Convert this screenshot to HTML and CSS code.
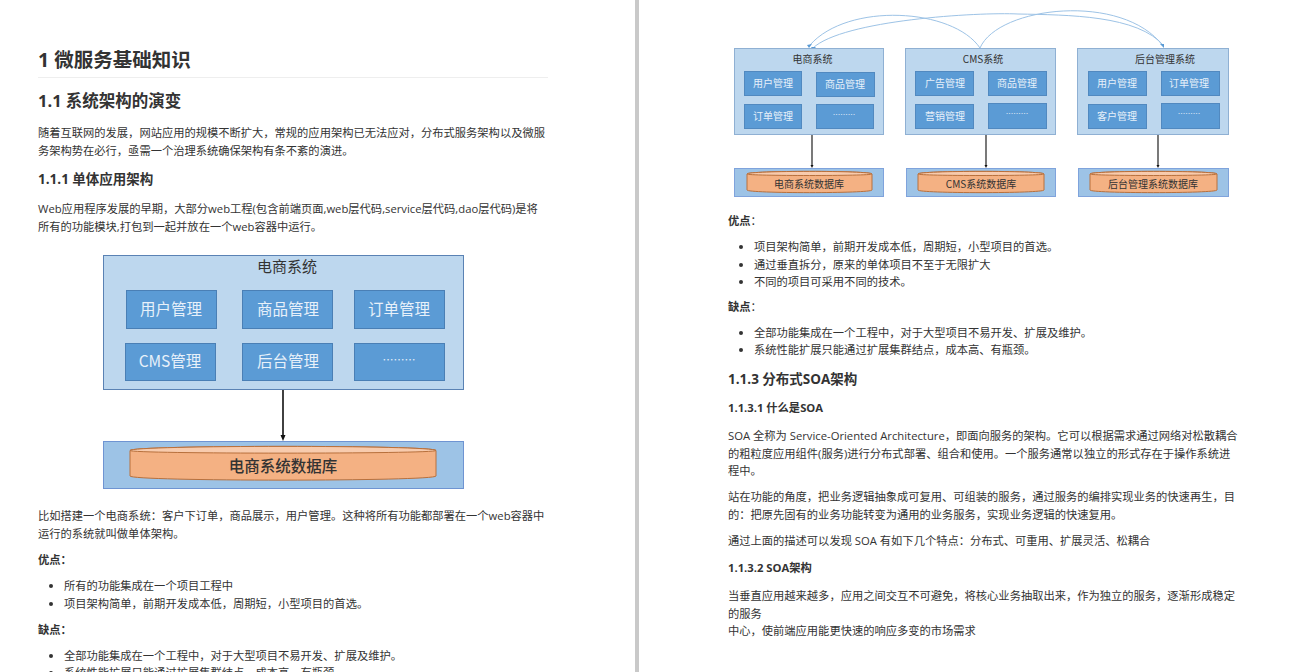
FILE: index.html
```html
<!DOCTYPE html>
<html lang="zh">
<head>
<meta charset="utf-8">
<title>微服务基础知识</title>
<link rel="stylesheet" href="styles.css">
</head>
<body>
<main class="viewer">
  <article class="page page-left">
    <h1>1 微服务基础知识</h1>
    <h2>1.1 系统架构的演变</h2>
    <p>随着互联网的发展，网站应用的规模不断扩大，常规的应用架构已无法应对，分布式服务架构以及微服务架构势在必行，亟需一个治理系统确保架构有条不紊的演进。</p>
    <h3>1.1.1 单体应用架构</h3>
    <p>Web应用程序发展的早期，大部分web工程(包含前端页面,web层代码,service层代码,dao层代码)是将所有的功能模块,打包到一起并放在一个web容器中运行。</p>
    <figure class="fig fig-mono">
      <svg width="370" height="240" viewBox="0 0 370 240">
        <rect x="5.5" y="6.5" width="360" height="134" fill="#bdd7ee" stroke="#5a82b4"/>
        <text class="t-dark" x="189" y="23" font-size="15">电商系统</text>
        <g class="box"><rect x="28.5" y="41.5" width="90" height="38"/><text x="73" y="66" font-size="15.5">用户管理</text></g>
        <g class="box"><rect x="144.5" y="41.5" width="90" height="38"/><text x="190" y="66" font-size="15.5">商品管理</text></g>
        <g class="box"><rect x="256.5" y="41.5" width="90" height="38"/><text x="301" y="66" font-size="15.5">订单管理</text></g>
        <g class="box"><rect x="27.5" y="94.5" width="90" height="37"/><text x="72" y="118" font-size="15.5">CMS管理</text></g>
        <g class="box"><rect x="144.5" y="94.5" width="90" height="37"/><text x="190" y="118" font-size="15.5">后台管理</text></g>
        <g class="box"><rect x="256.5" y="94.5" width="90" height="37"/><text x="301" y="115" font-size="11">………</text></g>
        <path d="M185 141V186" stroke="#111" stroke-width="1.6"/>
        <path d="M182.5 186h5L185 192z" fill="#111"/>
        <rect x="5.5" y="192.5" width="360" height="47" fill="#9dc3e6" stroke="#6f94d2"/>
        <path d="M32 201.5C32 196 338 196 338 201.5V227C338 232.5 32 232.5 32 227Z" fill="#f4b183" stroke="#b8703c"/>
        <path d="M32 201.5C32 205 338 205 338 201.5C338 196 32 196 32 201.5Z" fill="#f8cbad" stroke="#b8703c"/>
        <text class="t-dark t-db" x="185" y="223" font-size="15.5">电商系统数据库</text>
      </svg>
    </figure>
    <p>比如搭建一个电商系统：客户下订单，商品展示，用户管理。这种将所有功能都部署在一个web容器中运行的系统就叫做单体架构。</p>
    <p class="label"><strong>优点：</strong></p>
    <ul>
      <li>所有的功能集成在一个项目工程中</li>
      <li>项目架构简单，前期开发成本低，周期短，小型项目的首选。</li>
    </ul>
    <p class="label"><strong>缺点：</strong></p>
    <ul>
      <li>全部功能集成在一个工程中，对于大型项目不易开发、扩展及维护。</li>
      <li>系统性能扩展只能通过扩展集群结点，成本高、有瓶颈。</li>
    </ul>
  </article>
  <article class="page page-right">
    <figure class="fig fig-soa">
      <svg width="510" height="205" viewBox="0 0 510 205">
        <g fill="none" stroke="#9dc3e6" stroke-width="1">
          <path d="M252 48C225 8 120 2 82 45"/>
          <path d="M85 48C115 20 250 12 290 14C340 15 410 15 436 46"/>
          <path d="M252 48C270 6 395 -8 435 46"/>
        </g>
        <path d="M79 45l5-1-3 4zM83 47l5 0-3 3zM432 44l4 0 0 4z" fill="#5b9bd5"/>
        <g fill="#bdd7ee" stroke="#8fb0d3">
          <rect x="6.5" y="48.5" width="149" height="86"/>
          <rect x="177.5" y="48.5" width="150" height="86"/>
          <rect x="349.5" y="48.5" width="151" height="86"/>
        </g>
        <g class="t-dark" font-size="10">
          <text x="84.5" y="63">电商系统</text><text x="255" y="63">CMS系统</text><text x="437" y="63">后台管理系统</text>
        </g>
        <g class="box small">
          <rect x="16.5" y="71.5" width="57" height="24"/><text x="45" y="87">用户管理</text>
          <rect x="88.5" y="72.5" width="58" height="24"/><text x="117" y="88">商品管理</text>
          <rect x="16.5" y="104.5" width="57" height="24"/><text x="45" y="120">订单管理</text>
          <rect x="88.5" y="104.5" width="57" height="24"/><text class="dots" x="116" y="118">………</text>
          <rect x="187.5" y="71.5" width="58" height="24"/><text x="217" y="87">广告管理</text>
          <rect x="260.5" y="71.5" width="58" height="24"/><text x="289" y="87">商品管理</text>
          <rect x="187.5" y="104.5" width="58" height="24"/><text x="217" y="120">营销管理</text>
          <rect x="260.5" y="103.5" width="58" height="25"/><text class="dots" x="289" y="117">………</text>
          <rect x="360.5" y="71.5" width="58" height="24"/><text x="389" y="87">用户管理</text>
          <rect x="433.5" y="71.5" width="58" height="24"/><text x="461" y="87">订单管理</text>
          <rect x="360.5" y="104.5" width="58" height="24"/><text x="389" y="120">客户管理</text>
          <rect x="433.5" y="103.5" width="58" height="25"/><text class="dots" x="461" y="117">………</text>
        </g>
        <g stroke="#222" stroke-width="1.2">
          <path d="M84 135V166M258 135V166M430 135V166"/>
        </g>
        <path d="M82.5 165h3L84 168zM256.5 165h3L258 168zM428.5 165h3L430 168z" fill="#111"/>
        <g fill="#9dc3e6" stroke="#7fa3dc">
          <rect x="6.5" y="168.5" width="149" height="28"/>
          <rect x="178.5" y="168.5" width="149" height="28"/>
          <rect x="350.5" y="168.5" width="150" height="28"/>
        </g>
        <g fill="#f4b183" stroke="#b8703c">
          <path d="M19 174C19 170.5 144 170.5 144 174V190C144 193.5 19 193.5 19 190Z"/>
          <path d="M190 174C190 170.5 316 170.5 316 174V190C316 193.5 190 193.5 190 190Z"/>
          <path d="M362 174C362 170.5 489 170.5 489 174V190C489 193.5 362 193.5 362 190Z"/>
        </g>
        <g fill="#f8cbad" stroke="#b8703c">
          <path d="M19 174C19 170.5 144 170.5 144 174C144 176 19 176 19 174Z"/>
          <path d="M190 174C190 170.5 316 170.5 316 174C316 176 190 176 190 174Z"/>
          <path d="M362 174C362 170.5 489 170.5 489 174C489 176 362 176 362 174Z"/>
        </g>
        <g class="t-dark" font-size="10">
          <text x="81" y="188">电商系统数据库</text><text x="253" y="188">CMS系统数据库</text><text x="425" y="188">后台管理系统数据库</text>
        </g>
      </svg>
    </figure>
    <p class="label label-top"><strong>优点</strong>：</p>
    <ul>
      <li>项目架构简单，前期开发成本低，周期短，小型项目的首选。</li>
      <li>通过垂直拆分，原来的单体项目不至于无限扩大</li>
      <li>不同的项目可采用不同的技术。</li>
    </ul>
    <p class="label"><strong>缺点</strong>：</p>
    <ul>
      <li>全部功能集成在一个工程中，对于大型项目不易开发、扩展及维护。</li>
      <li>系统性能扩展只能通过扩展集群结点，成本高、有瓶颈。</li>
    </ul>
    <h3>1.1.3 分布式SOA架构</h3>
    <h4>1.1.3.1 什么是SOA</h4>
    <p>SOA 全称为 Service-Oriented Architecture，即面向服务的架构。它可以根据需求通过网络对松散耦合的粗粒度应用组件(服务)进行分布式部署、组合和使用。一个服务通常以独立的形式存在于操作系统进程中。</p>
    <p>站在功能的角度，把业务逻辑抽象成可复用、可组装的服务，通过服务的编排实现业务的快速再生，目的：把原先固有的业务功能转变为通用的业务服务，实现业务逻辑的快速复用。</p>
    <p>通过上面的描述可以发现 SOA 有如下几个特点：分布式、可重用、扩展灵活、松耦合</p>
    <h4>1.1.3.2 SOA架构</h4>
    <p>当垂直应用越来越多，应用之间交互不可避免，将核心业务抽取出来，作为独立的服务，逐渐形成稳定的服务<br>中心，使前端应用能更快速的响应多变的市场需求</p>
  </article>
</main>
</body>
</html>
```
FILE: styles.css
```css
* { box-sizing: border-box; }
html, body { margin: 0; height: 672px; overflow: hidden; background: #fff; }
body {
  font-family: "Open Sans", "Noto Sans CJK SC", sans-serif;
  font-size: 11.27px;
  line-height: 17.6px;
  color: #333;
}
.viewer { display: flex; height: 672px; overflow: hidden; }
.page { height: 672px; overflow: hidden; }
.page-left { width: 639px; padding: 48px 87px 0 38px; border-right: 4px solid #c9c9c9; }
.page-right { width: 655px; padding: 0 54px 0 89px; }
h1, h2, h3, h4, p, ul, figure { margin: 0; }
h1 { font-size: 19.5px; line-height: 24px; padding-bottom: 5px; border-bottom: 1px solid #eee; font-weight: 700; }
h2 { font-size: 16.5px; line-height: 22px; margin-top: 12px; font-weight: 700; }
h3 { font-size: 13.5px; line-height: 20px; margin-top: 10px; font-weight: 700; }
h4 { font-size: 11.27px; line-height: 18px; margin-top: 10px; font-weight: 700; }
p { margin-top: 8.4px; }
h2 + p { margin-top: 12px; }
h3 + p { margin-top: 11px; }
h4 + p { margin-top: 10px; }
ul { margin-top: 8.4px; padding-left: 26px; }
.label { margin-top: 8.4px; }
.page-right .label { margin-top: 7px; }
.page-right .label-top { margin-top: 7px; }
.fig svg { display: block; }
.fig-mono { margin: 14px 0 18px 60px; }
svg text { font-family: "Noto Sans CJK SC", sans-serif; text-anchor: middle; }
.t-dark { fill: #333; }
.t-db { font-weight: 500; }
.box rect { fill: #5b9bd5; stroke: #4a7fb5; }
.box text { fill: #e8f1fa; }
.small { font-size: 10px; }
.small rect { stroke: #5189c0; }
.box .dots { font-size: 7.5px; }
```
